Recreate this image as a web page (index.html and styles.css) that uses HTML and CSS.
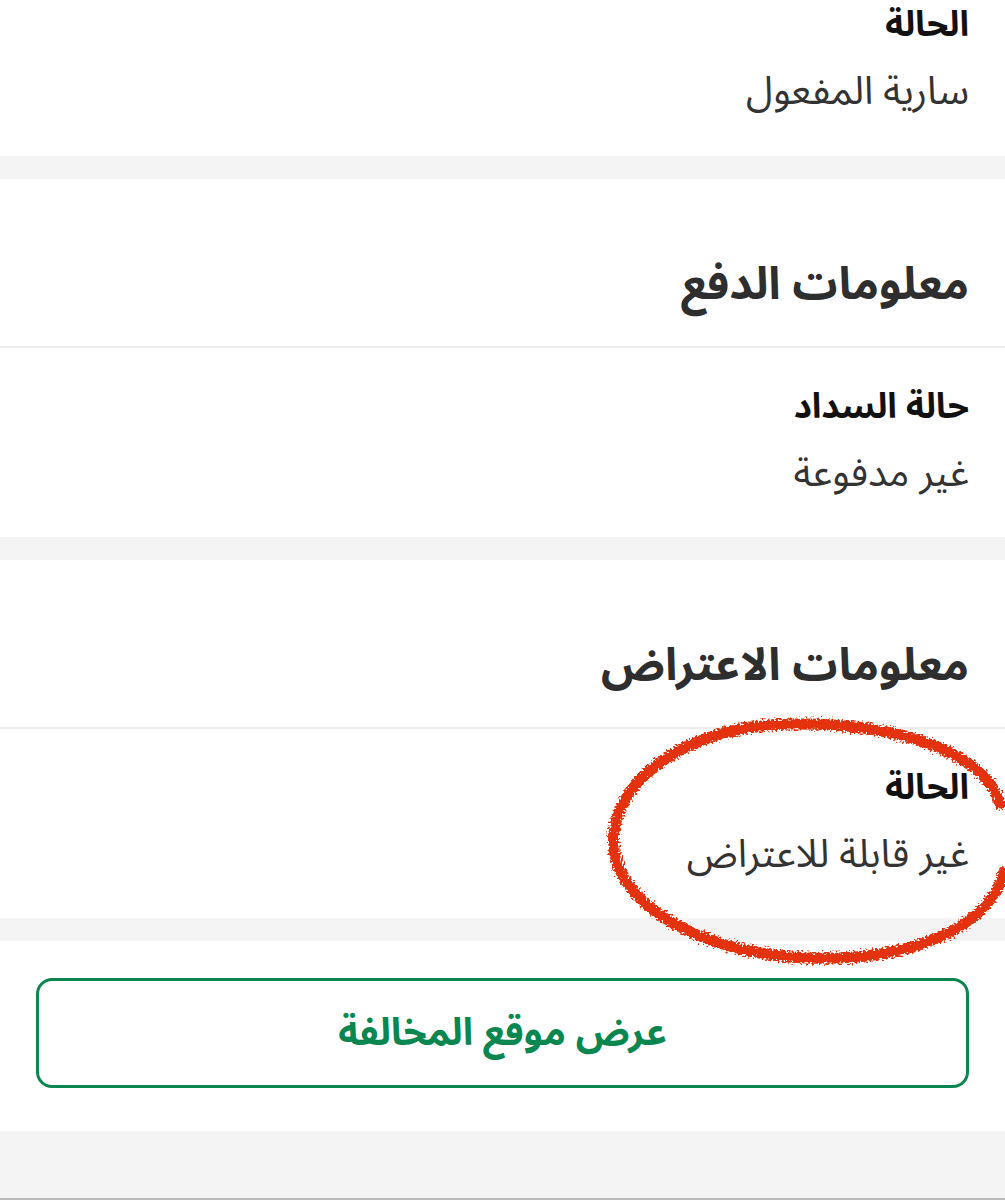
FILE: index.html
```html
<!DOCTYPE html>
<html lang="ar" dir="rtl">
<head>
<meta charset="utf-8">
<link rel="stylesheet" href="styles.css">
</head>
<body>
<main class="page">
  <section class="card">
    <div class="field field--first">
      <div class="label">الحالة</div>
      <div class="value">سارية المفعول</div>
    </div>
  </section>
  <div class="band"></div>
  <section class="card">
    <h2 class="title">معلومات الدفع</h2>
    <div class="divider"></div>
    <div class="field">
      <div class="label">حالة السداد</div>
      <div class="value">غير مدفوعة</div>
    </div>
  </section>
  <div class="band"></div>
  <section class="card card--marked">
    <h2 class="title">معلومات الاعتراض</h2>
    <div class="divider"></div>
    <div class="field">
      <div class="label">الحالة</div>
      <div class="value">غير قابلة للاعتراض</div>
    </div>
    <svg class="mark" width="1005" height="270" viewBox="0 0 1005 270" aria-hidden="true">
      <defs>
        <filter id="rough" x="-10%" y="-10%" width="120%" height="120%">
          <feTurbulence type="fractalNoise" baseFrequency="0.5" numOctaves="2" seed="3" result="n"/>
          <feDisplacementMap in="SourceGraphic" in2="n" scale="10" xChannelSelector="R" yChannelSelector="G"/>
        </filter>
      </defs>
      <path filter="url(#rough)" d="M 1000 92 C 985 38 890 10 790 12 C 695 14 622 60 614 120 C 606 185 690 240 805 246 C 912 250 990 215 1004 160" fill="none" stroke="#e3300c" stroke-width="11" stroke-linecap="round"/>
      <path filter="url(#rough)" d="M 790 12 C 830 10 870 14 905 24" fill="none" stroke="#e3300c" stroke-width="7" stroke-linecap="round"/>
    </svg>
  </section>
  <div class="band"></div>
  <section class="card card--action">
    <button class="btn" type="button">عرض موقع المخالفة</button>
  </section>
  <div class="footer-band"></div>
</main>
</body>
</html>
```

FILE: styles.css
```css
* { box-sizing: border-box; }
html, body { margin: 0; padding: 0; background: #ffffff; }
body {
  font-family: "Noto Sans Arabic", "Noto Sans Arabic UI", "Noto Sans", "DejaVu Sans", sans-serif;
  width: 1005px;
  height: 1200px;
  overflow: hidden;
}
.page { display: flex; flex-direction: column; }
.card { background: #ffffff; padding: 0 36px; }
.card--marked { position: relative; }
.band { height: 23px; background: #f4f4f4; }
.footer-band { height: 70px; background: #f4f4f4; border-bottom: 3px solid #b9b9b9; }
.title {
  margin: 0;
  padding: 72px 0 27px;
  font-size: 45px;
  line-height: 68px;
  font-weight: 700;
  color: #2e2e2e;
}
.divider { height: 2px; background: #ececec; margin: 0 -36px; }
.field { padding: 35px 0 35px; }
.field--first { padding-top: 1px; padding-bottom: 36px; }
.label {
  font-size: 35px;
  line-height: 48px;
  font-weight: 700;
  color: #111111;
}
.value {
  margin-top: 15px;
  font-size: 39px;
  line-height: 56px;
  color: #333333;
}
.mark {
  position: absolute;
  left: 0;
  top: 152px;
  pointer-events: none;
}
.card--action { padding: 37px 36px 43px; }
.btn {
  display: block;
  width: 100%;
  height: 110px;
  background: #ffffff;
  border: 3px solid #0a8750;
  border-radius: 16px;
  font-family: inherit;
  font-size: 38px;
  font-weight: 700;
  color: #0a8750;
}
```
